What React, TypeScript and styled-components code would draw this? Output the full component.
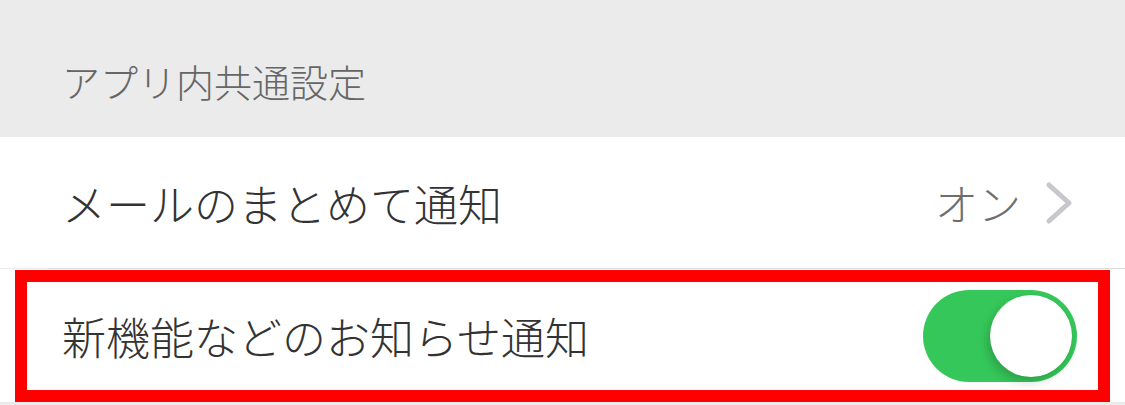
import React from "react";
import styled, { createGlobalStyle } from "styled-components";

const GlobalStyle = createGlobalStyle`
  html, body {
    margin: 0;
    padding: 0;
    background: #ebebeb;
    font-family: "Noto Sans CJK JP", "Noto Sans", sans-serif;
  }
`;

const Page = styled.div`
  width: 1125px;
  height: 405px;
  background: #ebebeb;
  overflow: hidden;
`;

const SectionHeader = styled.div`
  height: 137px;
  box-sizing: border-box;
  padding: 0 0 37px 62px;
  display: flex;
  align-items: flex-end;
  color: #666666;
  font-size: 38px;
  font-weight: 300;
  line-height: 1;
`;

const Row = styled.div`
  height: 131px;
  background: #ffffff;
  box-sizing: border-box;
  padding: 0 52px 0 62px;
  display: flex;
  align-items: center;
  justify-content: space-between;
`;

const Label = styled.span`
  color: #333333;
  font-size: 44px;
  font-weight: 300;
  line-height: 1;
`;

const Value = styled.div`
  display: flex;
  align-items: center;
  gap: 24px;
  color: #6e6e6e;
  font-size: 43px;
  font-weight: 300;
  line-height: 1;
`;

const Separator = styled.div`
  height: 1px;
  background: #dadada;
  margin-left: 48px;
`;

const HighlightRow = styled.div`
  height: 133px;
  background: #ffffff;
  box-sizing: border-box;
  padding: 1px 15px 0;
`;

const Highlight = styled.div`
  height: 100%;
  box-sizing: border-box;
  border: 12px solid #ff0000;
  padding: 0 21px 0 35px;
  display: flex;
  align-items: center;
  justify-content: space-between;
`;

const Switch = styled.div<{ $on: boolean }>`
  position: relative;
  width: 154px;
  height: 92px;
  border-radius: 46px;
  background: ${({ $on }) => ($on ? "#35c759" : "#e5e5ea")};
`;

const Knob = styled.div<{ $on: boolean }>`
  position: absolute;
  top: 5px;
  ${({ $on }) => ($on ? "right: 5px;" : "left: 5px;")}
  width: 82px;
  height: 82px;
  border-radius: 50%;
  background: #ffffff;
  box-shadow: -3px 5px 10px rgba(0, 0, 0, 0.18), 0 0 1px rgba(0, 0, 0, 0.1);
`;

const Chevron = () => (
  <svg width="28" height="44" viewBox="0 0 28 44">
    <path
      d="M4 4 L24 22 L4 40"
      fill="none"
      stroke="#c7c7cc"
      strokeWidth="5"
      strokeLinecap="round"
      strokeLinejoin="round"
    />
  </svg>
);

const App = () => {
  return (
    <Page>
      <GlobalStyle />
      <SectionHeader>アプリ内共通設定</SectionHeader>
      <Row>
        <Label>メールのまとめて通知</Label>
        <Value>
          オン
          <Chevron />
        </Value>
      </Row>
      <Separator />
      <HighlightRow>
        <Highlight>
          <Label>新機能などのお知らせ通知</Label>
          <Switch $on>
            <Knob $on />
          </Switch>
        </Highlight>
      </HighlightRow>
    </Page>
  );
};

export default App;
